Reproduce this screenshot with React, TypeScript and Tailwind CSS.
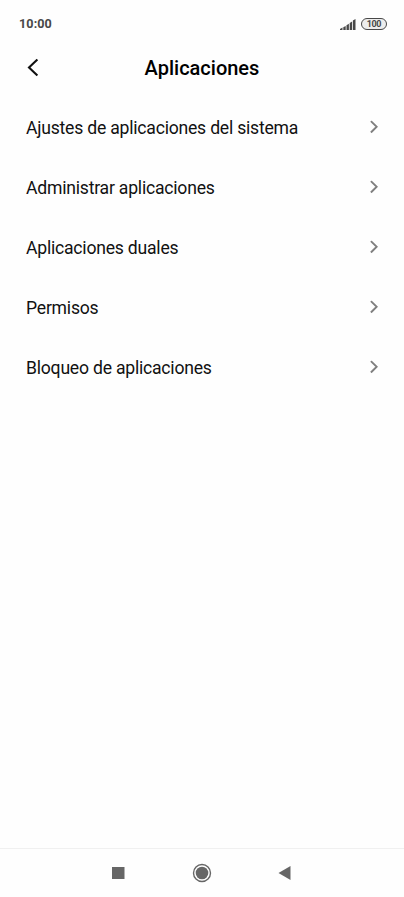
import { ReactNode } from "react";

const items = [
  "Ajustes de aplicaciones del sistema",
  "Administrar aplicaciones",
  "Aplicaciones duales",
  "Permisos",
  "Bloqueo de aplicaciones",
];

function StatusBar() {
  return (
    <div className="flex h-12 items-center justify-between pl-[19px] pr-[17px]">
      <span className="text-[12.6px] font-bold leading-none tracking-[0.1px] text-[#484848]">
        10:00
      </span>
      <div className="flex items-center gap-[5px]">
        <svg width="16" height="11" viewBox="0 0 16 11" fill="#484848">
          <path d="M0 11V10L2.5 8.5V11Z" />
          <path d="M3.3 11V8.3L5.7 6.9V11Z" />
          <path d="M6.5 11V6.2L8.9 4.8V11Z" />
          <path d="M9.7 11V3.9L12.1 2.4V11Z" />
          <path d="M12.9 11V1.4L15.5 0V11Z" />
        </svg>
        <div className="flex h-3 w-[26px] items-center justify-center rounded-full border-[1.3px] border-[#484848] bg-[#ededed] pt-px">
          <span className="text-[9px] font-bold leading-none tracking-[-0.4px] text-[#484848]">
            100
          </span>
        </div>
      </div>
    </div>
  );
}

function ListItem(props: { children: ReactNode }) {
  return (
    <button className="flex h-[59.8px] w-full items-center justify-between pl-[26px] pr-[26px] text-left">
      <span className="pt-px text-[17.6px] leading-6 tracking-[-0.22px] text-[#111111]">
        {props.children}
      </span>
      <svg
        width="8"
        height="13"
        viewBox="0 0 8 13"
        fill="none"
        stroke="#808080"
        strokeWidth="1.9"
        className="-translate-y-[0.7px]"
      >
        <path d="M0.9 0.8 6.7 6.5 0.9 12.2" />
      </svg>
    </button>
  );
}

function NavBar() {
  return (
    <nav className="flex h-[49px] border-t border-[#f0f0f0]">
      <button className="flex w-[134px] justify-end pr-[9.5px] pt-[17.5px]">
        <svg width="12.5" height="12.5" viewBox="0 0 12.5 12.5">
          <rect width="12.5" height="12.5" fill="#666666" />
        </svg>
      </button>
      <button className="flex w-[135px] justify-center pt-3.5">
        <svg width="20" height="20" viewBox="0 0 20 20">
          <circle
            cx="10"
            cy="10"
            r="8.5"
            fill="none"
            stroke="#666666"
            strokeWidth="1.4"
          />
          <circle cx="10" cy="10" r="6.3" fill="#666666" />
        </svg>
      </button>
      <button className="flex flex-1 pl-[9px] pt-[17px]">
        <svg width="13" height="14" viewBox="0 0 13 14">
          <path d="M12.5 0V14L0.5 7Z" fill="#666666" />
        </svg>
      </button>
    </nav>
  );
}

export default function App() {
  return (
    <div className="flex h-screen w-full flex-col bg-[#fefefe] font-[Roboto,sans-serif]">
      <StatusBar />

      <header className="grid h-10 grid-cols-[64px_1fr_64px] items-center">
        <button className="pl-[27px]">
          <svg
            width="12"
            height="18"
            viewBox="0 0 12 18"
            fill="none"
            stroke="#111111"
            strokeWidth="2.1"
            className="-translate-y-[0.5px]"
          >
            <path d="M10.4 0.9 2 9 10.4 17.1" />
          </svg>
        </button>
        <h1 className="text-center text-[20px] font-medium leading-6 text-black">
          Aplicaciones
        </h1>
      </header>

      <main className="flex-1 pt-[10px]">
        {items.map((item) => (
          <ListItem key={item}>{item}</ListItem>
        ))}
      </main>

      <NavBar />
    </div>
  );
}
